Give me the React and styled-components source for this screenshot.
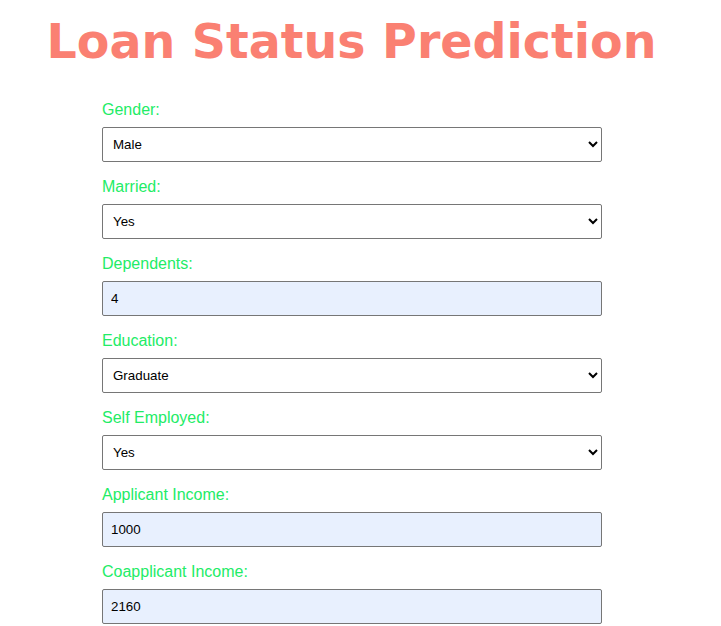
import React from "react";
import styled, { createGlobalStyle } from "styled-components";

const Global = createGlobalStyle`
  html, body { margin: 0; padding: 0; background: #ffffff; }
  body { font-family: "Liberation Sans", Arial, sans-serif; }
`;

const Page = styled.div`
  width: 703px;
`;

const Title = styled.h1`
  margin: 15px 0 31px;
  font-family: "DejaVu Sans", Verdana, sans-serif;
  font-weight: bold;
  font-size: 47.5px;
  line-height: 54px;
  color: #fa8072;
  text-align: center;
`;

const Form = styled.form`
  display: flex;
  flex-direction: column;
  width: 500px;
  margin-left: 102px;
`;

const Field = styled.div`
  display: flex;
  flex-direction: column;
  margin-bottom: 15px;
`;

const Label = styled.label`
  font-family: "Liberation Sans", Arial, sans-serif;
  font-size: 16px;
  line-height: 18px;
  color: #22ec66;
  padding-top: 1px;
  margin-bottom: 8px;
`;

const control = `
  box-sizing: border-box;
  width: 500px;
  height: 35px;
  border: 1px solid #767676;
  border-radius: 2px;
  font-family: "Liberation Sans", Arial, sans-serif;
  font-size: 13.33px;
  color: #000;
  margin: 0;
`;

const Select = styled.select`
  ${control}
  padding: 0 6px;
  background: #ffffff;
`;

const Input = styled.input`
  ${control}
  padding: 0 8px;
  background: #e8f0fe;
`;

const fields = [
  { label: "Gender:", type: "select", options: ["Male", "Female"], value: "Male" },
  { label: "Married:", type: "select", options: ["Yes", "No"], value: "Yes" },
  { label: "Dependents:", type: "input", value: "4" },
  { label: "Education:", type: "select", options: ["Graduate", "Not Graduate"], value: "Graduate" },
  { label: "Self Employed:", type: "select", options: ["Yes", "No"], value: "Yes" },
  { label: "Applicant Income:", type: "input", value: "1000" },
  { label: "Coapplicant Income:", type: "input", value: "2160" },
];

export default function App() {
  return (
    <Page>
      <Global />
      <Title>Loan Status Prediction</Title>
      <Form onSubmit={(e) => e.preventDefault()}>
        {fields.map((f, i) => (
          <Field key={i}>
            <Label htmlFor={`f${i}`}>{f.label}</Label>
            {f.type === "select" ? (
              <Select id={`f${i}`} defaultValue={f.value}>
                {f.options.map((o) => (
                  <option key={o}>{o}</option>
                ))}
              </Select>
            ) : (
              <Input id={`f${i}`} type="text" defaultValue={f.value} />
            )}
          </Field>
        ))}
      </Form>
    </Page>
  );
}
